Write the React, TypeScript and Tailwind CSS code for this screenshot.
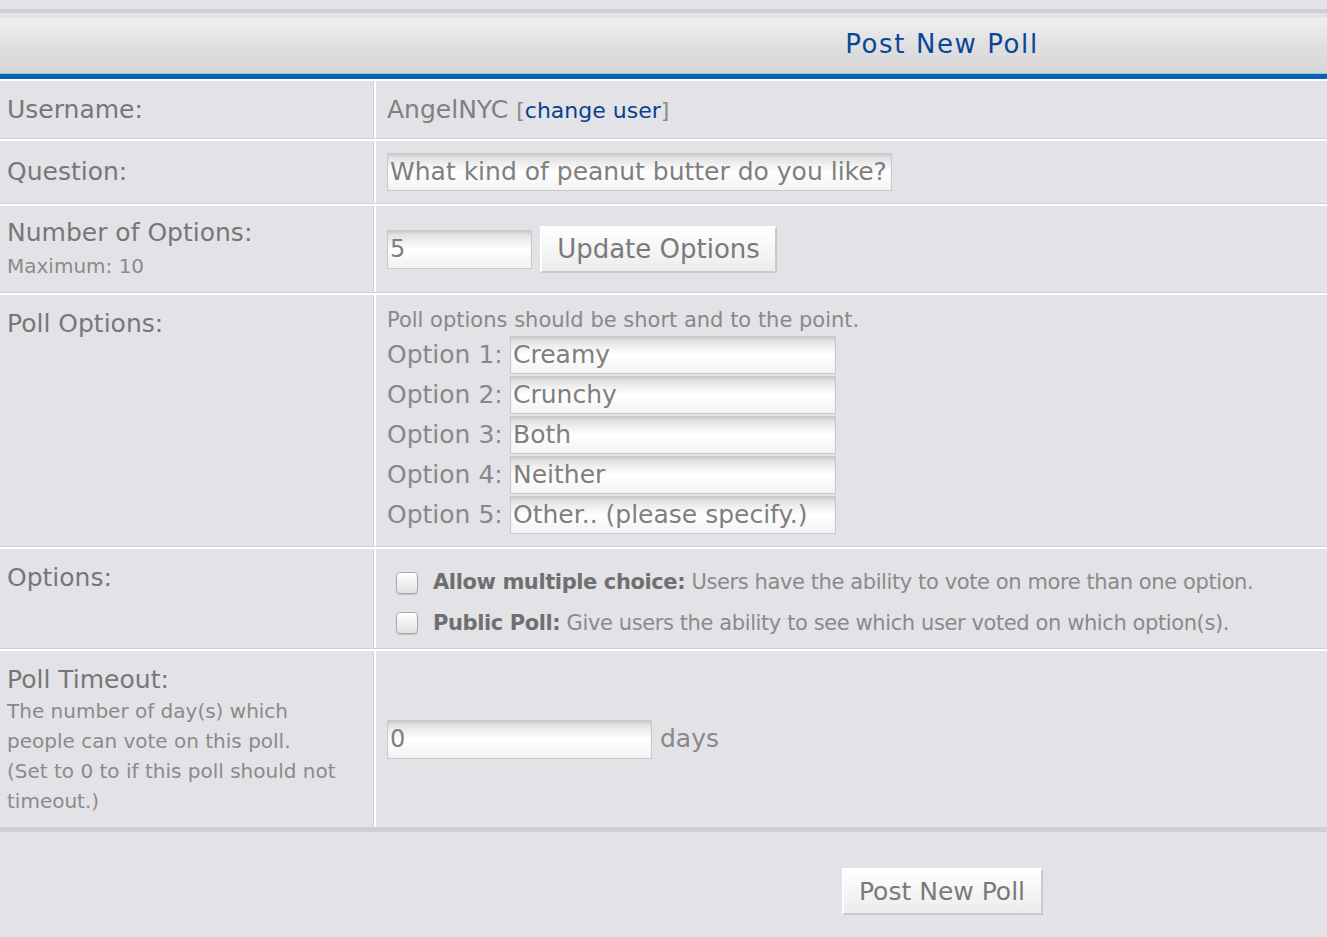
import type React from "react";

const font = { fontFamily: '"DejaVu Sans", "Liberation Sans", sans-serif' };

function TextBox({ value, className }: { value: string; className: string }) {
  return (
    <div
      className={`flex shrink-0 items-center overflow-hidden whitespace-nowrap border border-[#c9c9cc] bg-gradient-to-b from-[#dcdcdc] via-white to-[#f2f2f2] px-[2px] text-[#7f7f7f] shadow-[inset_0_2px_2px_rgba(0,0,0,0.08)] ${className}`}
    >
      {value}
    </div>
  );
}

function Button({ label, className }: { label: string; className: string }) {
  return (
    <button
      className={`shrink-0 whitespace-nowrap border-2 border-t-white border-l-white border-r-[#cacacd] border-b-[#cacacd] bg-gradient-to-b from-white to-[#ececec] text-[#7a7a7a] ${className}`}
      type="button"
    >
      {label}
    </button>
  );
}

function Row({
  label,
  children,
  className,
  cellClass = "",
}: {
  label: React.ReactNode;
  children: React.ReactNode;
  className: string;
  cellClass?: string;
}) {
  return (
    <div
      className={`grid grid-cols-[374px_1fr] border-t-2 border-b border-t-white border-b-[#cfcfd3] ${className}`}
    >
      <div className={`border-r border-[#cfcfd3] pl-[7px] ${cellClass}`}>{label}</div>
      <div className={`border-l-2 border-white pl-[11px] ${cellClass}`}>{children}</div>
    </div>
  );
}

function Checkbox() {
  return (
    <span className="h-[22px] w-[22px] shrink-0 rounded-[4px] border border-[#a9a9ad] bg-gradient-to-b from-white to-[#e2e2e2] shadow-[0_1px_1px_rgba(0,0,0,0.15)]" />
  );
}

export default function App() {
  const options = ["Creamy", "Crunchy", "Both", "Neither", "Other.. (please specify.)"];

  return (
    <div className="min-h-[937px] w-full overflow-hidden bg-[#e3e3e7]" style={font}>
      <div className="pt-[9px]">
        <div className="h-[4px] bg-[#d0d0d4]" />
      </div>
      <div className="w-[1884px]">
        <div className="mt-[5px] flex h-[55px] items-center justify-center bg-gradient-to-b from-[#efeff0] via-[#e0e0e1] to-[#d5d5d6]">
          <span className="pb-[3px] text-[26px] tracking-[1.6px] text-[#0b4596]">Post New Poll</span>
        </div>
        <div className="h-px bg-[#90c6e8]" />
        <div className="h-[5px] bg-[#0862b0]" />
        <div className="w-[1327px]">
          <Row
            cellClass="flex items-center"
            className="h-[60px]"
            label={<span className="text-[25px] text-[#777]">Username:</span>}
          >
            <span className="text-[25px] text-[#808080]">AngelNYC</span>
            <span className="pl-[8px] pt-[2px] text-[22px] text-[#8a8a8a]">
              [<span className="text-[#0a3f8e]">change user</span>]
            </span>
          </Row>
          <Row
            cellClass="flex items-center"
            className="h-[65px]"
            label={<span className="text-[25px] text-[#777]">Question:</span>}
          >
            <TextBox className="h-[38px] w-[505px] text-[25px]" value="What kind of peanut butter do you like?" />
          </Row>
          <Row
            className="h-[89px]"
            label={
              <div className="pt-[11px]">
                <div className="text-[25px] leading-[32px] text-[#777]">Number of Options:</div>
                <div className="pt-[3px] text-[20px] leading-[28px] text-[#8a8a8a]">Maximum: 10</div>
              </div>
            }
          >
            <div className="flex h-full items-center gap-[8px]">
              <TextBox className="h-[39px] w-[145px] text-[24px]" value="5" />
              <Button className="h-[47px] w-[237px] text-[26px]" label="Update Options" />
            </div>
          </Row>
          <Row
            className="h-[254px]"
            label={<div className="pt-[10px] text-[25px] text-[#777]">Poll Options:</div>}
          >
            <div className="pt-[13px]">
              <div className="whitespace-nowrap text-[21px] leading-[25px] text-[#888]">
                Poll options should be short and to the point.
              </div>
              <div className="mt-[3px] flex flex-col gap-[2px]">
                {options.map((o, i) => (
                  <div className="flex h-[38px] items-center gap-[8px]" key={o}>
                    <span className="w-[115px] shrink-0 whitespace-nowrap text-[25px] text-[#888]">
                      Option {i + 1}:
                    </span>
                    <TextBox className="h-[38px] w-[326px] text-[25px]" value={o} />
                  </div>
                ))}
              </div>
            </div>
          </Row>
          <Row
            className="h-[102px]"
            label={<div className="pt-[10px] text-[25px] text-[#777]">Options:</div>}
          >
            <div className="flex flex-col gap-[9px] pt-[18px] pl-[9px] text-[21px] tracking-[-0.4px] text-[#8a8a8a]">
              <div className="flex items-center gap-[15px]">
                <Checkbox />
                <span className="whitespace-nowrap">
                  <b className="font-semibold text-[#6f6f6f]">Allow multiple choice:</b> Users have the ability to vote on more than one option.
                </span>
              </div>
              <div className="flex items-center gap-[15px]">
                <Checkbox />
                <span className="whitespace-nowrap">
                  <b className="font-semibold text-[#6f6f6f]">Public Poll:</b> Give users the ability to see which user voted on which option(s).
                </span>
              </div>
            </div>
          </Row>
          <Row
            className="h-[179px]"
            label={
              <div className="pt-[13px]">
                <div className="text-[25px] leading-[32px] text-[#777]">Poll Timeout:</div>
                <div className="whitespace-nowrap text-[20px] leading-[30px] text-[#8a8a8a]">
                  The number of day(s) which
                  <br />
                  people can vote on this poll.
                  <br />
                  (Set to 0 to if this poll should not
                  <br />
                  timeout.)
                </div>
              </div>
            }
          >
            <div className="flex h-full items-center gap-[8px]">
              <TextBox className="h-[39px] w-[265px] text-[24px]" value="0" />
              <span className="text-[25px] text-[#888]">days</span>
            </div>
          </Row>
        </div>
        <div className="h-[4px] bg-[#d0d0d4]" />
        <div className="flex justify-center pt-[36px]">
          <Button className="h-[47px] w-[201px] text-[25px]" label="Post New Poll" />
        </div>
      </div>
    </div>
  );
}
